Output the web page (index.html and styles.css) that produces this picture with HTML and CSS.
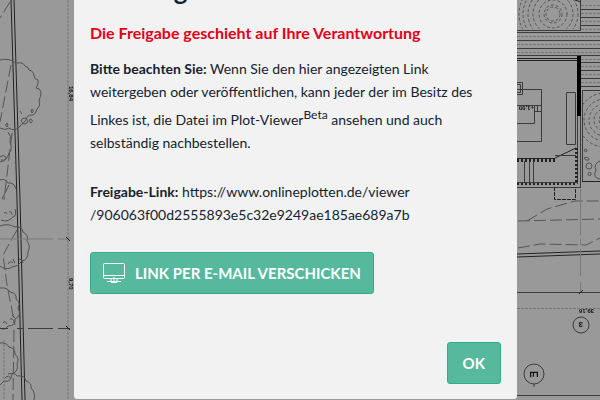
FILE: index.html
```html
<!DOCTYPE html>
<html lang="de">
<head>
  <meta charset="UTF-8">
  <title>Plot-Viewer</title>
  <link rel="stylesheet" href="styles.css">
</head>
<body>

  <svg class="plan" viewBox="0 0 600 400" preserveAspectRatio="xMidYMid slice" aria-hidden="true">
    <defs>
      <clipPath id="bedTop"><rect x="517" y="0" width="63" height="29"/></clipPath>
      <clipPath id="bedSide"><rect x="582" y="91" width="18" height="90"/></clipPath>
    </defs>

    <!-- property boundary and trees -->
    <path class="wall" d="M11 0L17 200L22 400M14 0L20 200L25 400"/>
    <path class="tree" d="M0 60Q9 58 14 62L18 63Q23 62 25 66Q29 67 29 70Q34 71 34 76Q34 79 38 80Q39 84 36 88Q40 88 41 92Q41 97 39 100Q41 106 37 109Q35 116 31 115Q27 115 26 120Q22 125 19 127Q14 132 9 128Q5 131 0 128M24 118a3 3 0 1 0 1 6a3 3 0 1 0-1-6M20 111l2 3M32 109q3 2 0 4q-2-2 0-4M30 119q4 1 1 4q-3-1-1-4M7 123q2 2 0 4q-3-2 0-4"/>
    <path class="tree" d="M8 132Q12 136 10 142Q13 149 9 153Q7 161 0 162M0 157q3-3 6 0q0 4-5 3M0 180Q5 178 8 183Q14 182 16 189M9 185l-7 14M1 220Q7 223 13 217Q17 216 15 209M4 213q2-2 3 1M9 212q3-1 3 3M0 226Q8 223 15 227Q22 226 23 232Q29 235 27 241Q31 246 28 252Q28 260 22 261Q18 267 12 267Q6 271 0 266M8 264q2-4 5-1M13 259l2 4M19 259q4 0 4 4"/>
    <path class="tree" d="M0 288Q7 287 10 292Q17 293 16 299Q21 302 18 308Q22 316 15 319Q16 326 8 326Q5 331 0 328M3 323q2-3 4 1M10 319q4-1 4 4M12 315l3 3M0 343Q6 342 9 347Q15 348 15 354Q20 359 17 364Q19 371 12 374Q11 383 4 381L0 385M5 378q4-4 6 1M8 374Q14 372 17 376Q25 375 26 381Q32 383 31 388Q36 393 34 400"/>
    <path class="dash" d="M10 2L0 18M11 65L0 122M12 133L4 200M17 230L3 255L7 285L15 325M14 330L13 400"/>
    <path class="dots" d="M68 0V400M4 340V400"/>
    <path class="faint" d="M0 239H53M58 239H70"/>
    <path class="line" d="M0 328.500H8M17 328.500H23M28 328.500H53M58 328.500H70"/>
    <path class="wall" d="M66 237l4 4M66 326l4 4"/>
    <text class="measure" transform="translate(69 86) rotate(90)">16,84</text>
    <text class="measure" transform="translate(69 278) rotate(90)">9,70</text>

    <!-- terrace -->
    <g class="ring" clip-path="url(#bedTop)">
      <circle cx="553" cy="14" r="7"/><circle cx="553" cy="14" r="9"/>
      <circle cx="553" cy="14" r="14"/><circle cx="553" cy="14" r="20"/>
      <circle cx="553" cy="14" r="25"/><circle cx="553" cy="14" r="30"/>
      <circle cx="553" cy="14" r="34"/>
    </g>
    <path class="line" d="M517 30.500H580.500V0M517 32.500H600M517 40.500H600M517 48.500H600M517 55.500H600M581 9.500H600M581 17.500H600M581 25.500H600M581 62.500H600M581 70.500H600M581 78.500H600M581 86.500H600"/>
    <path class="dots" d="M517 36.500H600M517 44.500H600M517 52.500H600M581 5.500H600M581 13.500H600M581 21.500H600M581 29.500H600M581 59.500H600M581 66.500H600M581 74.500H600M581 82.500H600"/>
    <path class="wall" d="M575 0l6 2"/>

    <!-- house -->
    <path class="wall" d="M517 58.500H577M517 60.500H577"/>
    <rect class="solid" x="577" y="56" width="4" height="60"/>
    <path class="line" d="M517 82.500H522.500V94.500H517M517 84.500H520.500V92.500H517M517 89.500H541.500V141.500H517M517 105.500H534.500V123.500H517M534.500 105.500H541M534.500 111.500H541M537.500 105V111M566.500 144.500V92.500H575.500V144.500ZM577.500 116V184M580.500 116V187"/>
    <text class="measure" transform="translate(534 106) rotate(180)">+1,00</text>
    <path class="wall" d="M517 158.500H555M555 158L576 148"/>
    <path class="hatch" d="M517 160.500H555M576.500 148V183M517 183.500H577"/>
    <path class="line" d="M555 155.500H576M524.500 161V182M529.500 161V182M533.500 161V182M517 182.500H578M517 187.500H581"/>
    <path class="dash-dark" d="M554.500 187V199.500H575.500V187"/>

    <!-- planting next to the house -->
    <path class="line" d="M582.500 181V90.500H600"/>
    <g class="ring" clip-path="url(#bedSide)">
      <circle cx="605" cy="120" r="6"/><circle cx="605" cy="120" r="11"/>
      <circle cx="605" cy="120" r="16"/><circle cx="605" cy="120" r="21"/>
      <circle cx="605" cy="120" r="27"/>
    </g>
    <path class="tree" d="M584 150q3-2 3 1q-2 2-3-1M584 158q5-2 5 2q-4 1-5-2M586 166a3 3 0 1 0 6 0a3 3 0 1 0-6 0M588 173q4-2 3 2q-3 2-3-2M600 161Q593 164 596 170Q592 178 600 179"/>
    <path class="wall" d="M582 181.500H600"/>

    <!-- street -->
    <path class="dash" d="M527 221L547 209L575 201L600 201M518 221L600 219M518 248L540 244L586 245L600 238"/>
    <path class="wall" d="M517 254L600 251M517 257L600 254"/>
    <path class="faint" d="M580.500 189V235M580.500 239V245M580.500 249V276M580.500 282V292"/>
    <path class="line" d="M517 292.500H600M517 395.500H600"/>
    <path class="dots" d="M517 308.500H600"/>
    <path class="wall" d="M579 294l4-4"/>
    <text class="measure" transform="translate(594 309) rotate(180)">39,16</text>
    <circle class="line" cx="581" cy="325" r="8"/>
    <text class="axis" transform="translate(583 322) rotate(180)">3</text>
    <circle class="line" cx="534" cy="374" r="10"/>
    <path class="line" d="M534 384V387"/>
    <text class="axis axis-big" transform="translate(530 371) rotate(90)">E</text>
  </svg>

  <main class="dialog" role="dialog" aria-labelledby="dialogTitle">
    <h1 id="dialogTitle">Achtung</h1>
    <h2>Die Freigabe geschieht auf Ihre Verantwortung</h2>

    <p>
      <strong>Bitte beachten Sie:</strong> Wenn Sie den hier angezeigten Link<br>
      weitergeben oder veröffentlichen, kann jeder der im Besitz des<br>
      Linkes ist, die Datei im Plot-Viewer<sup>Beta</sup> ansehen und auch<br>
      selbständig nachbestellen.
    </p>

    <p>
      <strong>Freigabe-Link:</strong> https://www.onlineplotten.de/viewer<br>
      /906063f00d2555893e5c32e9249ae185ae689a7b
    </p>

    <button class="btn btn-mail" type="button">
      <svg class="icon" viewBox="0 0 22 20" aria-hidden="true">
        <rect x="0.500" y="0.500" width="21" height="15" rx="1"/>
        <path d="M1 12.500H21M11 14v5M8 16v2.500M14 16v2.500M4 18.500H18M8 19.500H14"/>
      </svg>
      LINK PER E-MAIL VERSCHICKEN
    </button>

    <div class="actions">
      <button class="btn" type="button">OK</button>
    </div>
  </main>

</body>
</html>
```
FILE: styles.css
```css
body {
  margin: 0;
  background: #999;
  color: #14232f;
  font-family: Lato, "Open Sans", sans-serif;
  font-size: 14px;
  line-height: 23px;
  overflow: hidden;
}

/* drawing behind the dialog */
.plan {
  position: fixed;
  inset: 0;
  width: 100%;
  height: 100%;
  fill: none;
  stroke: #444;
  stroke-width: 1;
}
.plan .line {
  stroke: #3c3c3c;
}
.plan .wall {
  stroke: #222;
}
.plan .tree {
  stroke: #505050;
}
.plan .faint {
  stroke: #7b7b7b;
}
.plan .dots {
  stroke: #777;
  stroke-dasharray: 3 1;
}
.plan .dash {
  stroke: #555;
  stroke-dasharray: 12 4;
}
.plan .dash-dark {
  stroke: #222;
  stroke-dasharray: 4 1;
}
.plan .ring {
  stroke: #555;
  stroke-dasharray: 3 2;
}
.plan .hatch {
  stroke: #222;
  stroke-width: 3;
  stroke-dasharray: 2 2;
}
.plan .solid {
  fill: #000;
  stroke: none;
}
.plan text {
  fill: #111;
  stroke: none;
  font-family: "Liberation Sans", sans-serif;
  font-weight: bold;
}
.plan .measure {
  font-size: 6px;
}
.plan .axis {
  font-size: 8px;
}
.plan .axis-big {
  font-size: 10px;
}

.dialog {
  position: relative;
  box-sizing: border-box;
  min-height: 100vh;
  margin: 0 83px 0 74px;
  padding: 0 16px 15px;
  background: #f2f2f2;
  border-radius: 0 0 3px 3px;
}
.dialog h1 {
  margin: -29px 0 12px;
  font-size: 26px;
  line-height: 38px;
}
.dialog h2 {
  margin: 0 0 12px;
  color: #e2001a;
  font-size: 16px;
  line-height: 24px;
}
.dialog p {
  margin: 0 0 26px;
}
.dialog sup {
  font-size: 12px;
}

.btn {
  display: inline-flex;
  align-items: center;
  height: 42px;
  padding: 0 15px;
  background: #56b99d;
  border: 1px solid #2daf8c;
  border-radius: 3px;
  color: #fff;
  font-family: inherit;
  font-size: 15px;
  font-weight: bold;
}
.btn-mail {
  gap: 10px;
  padding: 0 12px;
}
.icon {
  width: 22px;
  height: 20px;
  fill: none;
  stroke: #fff;
}
.actions {
  display: flex;
  justify-content: flex-end;
  margin-top: 48px;
}
```
